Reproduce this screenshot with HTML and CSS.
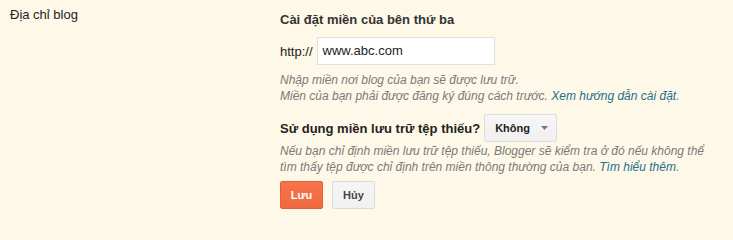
FILE: index.html
```html
<!DOCTYPE html>
<html lang="vi">
<head>
<meta charset="utf-8">
<title>Địa chỉ blog</title>
<link rel="stylesheet" href="styles.css">
</head>
<body>
<div class="row">
  <div class="label">Địa chỉ blog</div>
  <div class="content">
    <h3 class="title">Cài đặt miền của bên thứ ba</h3>
    <div class="field">
      <span class="prefix">http://</span>
      <div class="input">www.abc.com</div>
    </div>
    <p class="help">Nhập miền nơi blog của bạn sẽ được lưu trữ.<br>Miền của bạn phải được đăng ký đúng cách trước. <a href="#">Xem hướng dẫn cài đặt</a>.</p>
    <div class="question">
      <span class="qtext">Sử dụng miền lưu trữ tệp thiếu?</span>
      <button class="select">Không <svg class="caret" width="7" height="4" viewBox="0 0 7 4"><path d="M0 0h7L3.5 4z" fill="#777"/></svg></button>
    </div>
    <p class="help help2">Nếu bạn chỉ định miền lưu trữ tệp thiếu, Blogger sẽ kiểm tra ở đó nếu không thể tìm thấy tệp được chỉ định trên miền thông thường của bạn. <a href="#">Tìm hiểu thêm</a>.</p>
    <div class="actions">
      <button class="btn primary">Lưu</button>
      <button class="btn">Hủy</button>
    </div>
  </div>
</div>
</body>
</html>
```
FILE: styles.css
```css
html, body {
  margin: 0;
  padding: 0;
  background: #fdf8e7;
  font-family: "Liberation Sans", Arial, sans-serif;
  color: #222;
}
.row {
  display: flex;
}
.label {
  width: 270px;
  padding: 7px 0 0 10px;
  font-size: 13px;
  line-height: 16px;
  color: #222;
}
.content {
  width: 432px;
  padding-top: 12px;
}
.title {
  margin: 0;
  font-size: 13px;
  line-height: 16px;
  font-weight: bold;
  color: #333;
}
.field {
  display: flex;
  align-items: center;
  gap: 4px;
  margin-top: 9px;
  font-size: 13px;
}
.prefix {
  color: #222;
}
.input {
  box-sizing: border-box;
  width: 178px;
  height: 28px;
  line-height: 26px;
  padding: 0 5px;
  background: #fff;
  border: 1px solid #e3e0d8;
  color: #222;
  font-size: 13px;
}
.help {
  margin: 7px 0 0;
  font-size: 12px;
  line-height: 16px;
  font-style: italic;
  color: #7a7a7a;
}
.help a {
  color: #1f6f8b;
  text-decoration: none;
}
.question {
  display: flex;
  align-items: center;
  gap: 4px;
  margin-top: 10px;
}
.qtext {
  font-size: 13px;
  font-weight: bold;
  color: #222;
}
.select {
  box-sizing: border-box;
  height: 28px;
  width: 73px;
  padding: 0 0 0 10px;
  display: flex;
  align-items: center;
  gap: 11px;
  background: linear-gradient(#f6f6f6, #f0f0f0);
  border: 1px solid #dcdcdc;
  border-radius: 2px;
  font-family: "Liberation Sans", Arial, sans-serif;
  font-size: 11px;
  font-weight: bold;
  color: #222;
}
.help2 {
  margin-top: 1px;
  line-height: 16px;
}
.actions {
  display: flex;
  gap: 9px;
  margin-top: 6px;
}
.btn {
  box-sizing: border-box;
  width: 43px;
  height: 28px;
  padding: 0;
  border: 1px solid #dcdcdc;
  border-radius: 2px;
  background: linear-gradient(#f5f5f5, #f1f1f1);
  font-family: "Liberation Sans", Arial, sans-serif;
  font-size: 11px;
  font-weight: bold;
  color: #444;
}
.btn.primary {
  background: linear-gradient(#f7734a, #f06a40);
  border-color: #e35f36;
  color: #fff;
}
```
